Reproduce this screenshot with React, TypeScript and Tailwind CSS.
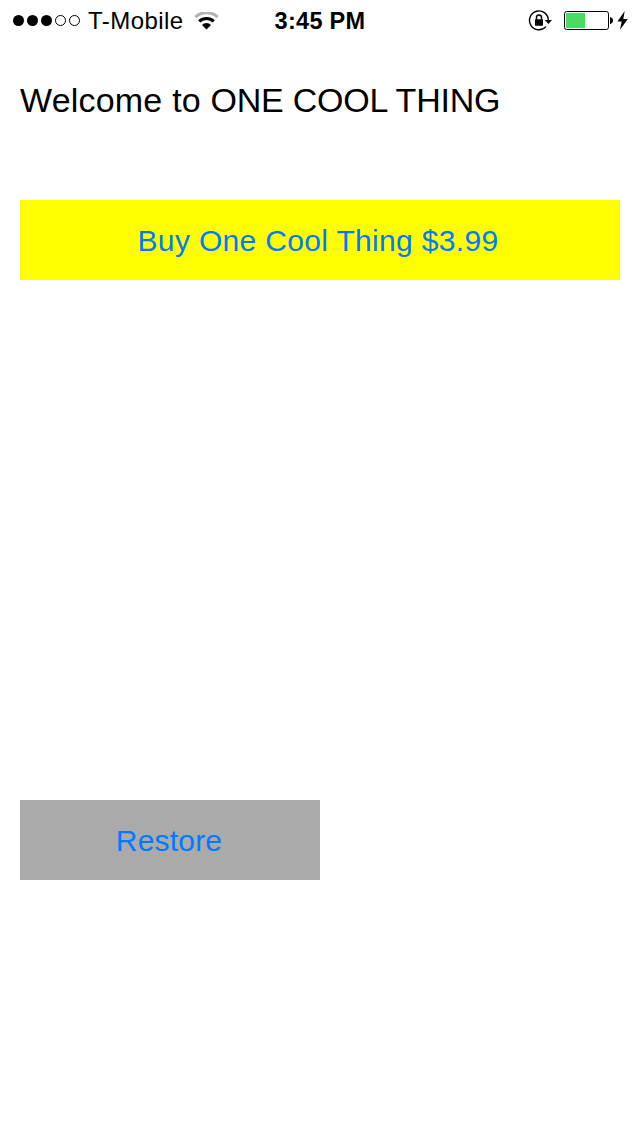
function SignalDots() {
  return (
    <svg className="block h-3 w-[68px]" viewBox="0 0 68 12">
      <circle cx="5.5" cy="5.5" r="5.5" />
      <circle cx="19.5" cy="5.5" r="5.5" />
      <circle cx="33.5" cy="5.5" r="5.5" />
      <circle cx="47.5" cy="5.5" r="5" fill="none" stroke="#000" />
      <circle cx="61.5" cy="5.5" r="5" fill="none" stroke="#000" />
    </svg>
  );
}

function WifiIcon() {
  return (
    <svg className="block h-[18px] w-[25px]" viewBox="0 0 25 18" fill="none">
      <path d="M1.3 5.1a16.4 16.4 0 0 1 22.4 0" stroke="#b3b3b3" strokeWidth="3" />
      <path d="M5.2 9.4a10.6 10.6 0 0 1 14.6 0" stroke="#000" strokeWidth="3" />
      <path d="M8 12.9a6.4 6.4 0 0 1 9 0L12.5 17.4Z" fill="#000" />
    </svg>
  );
}

function RotationLockIcon() {
  return (
    <svg className="block h-6 w-6" viewBox="0 0 24 24" fill="none">
      <path d="M20.3 11.5A9.4 9.4 0 1 0 17.9 17.6" stroke="#000" strokeWidth="1.4" />
      <path d="M16.8 11h7.2l-3.6 4Z" fill="#000" />
      <rect x="7" y="10.3" width="8" height="6.4" rx=".4" fill="#000" />
      <path d="M8.5 10.8V8.5a2.5 2.5 0 0 1 5 0v2.3" stroke="#000" strokeWidth="1.5" />
    </svg>
  );
}

function BatteryIcon() {
  return (
    <svg className="block h-5 w-[50px]" viewBox="0 0 50 20">
      <rect x=".5" y=".5" width="44" height="18" rx="2.2" fill="none" stroke="#000" />
      <rect x="2" y="2" width="19" height="15" fill="#4cd964" />
      <path d="M46 6c4 .5 4 6.5 0 7Z" />
    </svg>
  );
}

function ChargingIcon() {
  return (
    <svg className="block h-5 w-3" viewBox="0 0 12 20">
      <path d="M7.7 0 .5 10.4h4.2L3 18.8 10.8 8H6.3Z" />
    </svg>
  );
}

export default function App() {
  return (
    <div className="min-h-[1136px] w-[640px] bg-white font-['Liberation_Sans',Arial,sans-serif] text-black">
      <header className="grid h-10 grid-cols-[1fr_92px_1fr] items-center">
        <div className="flex items-center pl-[13px]">
          <SignalDots />
          <span className="ml-[7px] w-[96px] whitespace-nowrap pt-px text-[24px] leading-10 tracking-[0.45px]">T-Mobile</span>
          <div className="ml-2.5">
            <WifiIcon />
          </div>
        </div>
        <time className="whitespace-nowrap pt-px text-center text-[23.5px] font-bold leading-10 tracking-[0.3px]">3:45 PM</time>
        <div className="flex items-center justify-end pr-[11px]">
          <RotationLockIcon />
          <div className="ml-3 mr-[3px] pt-px">
            <BatteryIcon />
          </div>
          <ChargingIcon />
        </div>
      </header>
      <main className="flex flex-col items-start px-5 pt-5">
        <h1 className="h-20 whitespace-nowrap text-[34px] leading-[80px] tracking-[-0.22px]">
          <span className="tracking-[0.2px]">Welcome to </span>ONE COOL THING
        </h1>
        <button className="mt-[60px] h-20 w-full whitespace-nowrap bg-[#ffff00] pr-1 pt-0.5 text-[30px] leading-[78px] tracking-[0.33px] text-[#007aff]">
          Buy One Cool Thing $3.99
        </button>
        <button className="mt-[520px] h-20 w-[300px] bg-[#aaaaaa] pr-0.5 pt-0.5 text-[30px] leading-[78px] tracking-[0.2px] text-[#007aff]">
          Restore
        </button>
      </main>
    </div>
  );
}
